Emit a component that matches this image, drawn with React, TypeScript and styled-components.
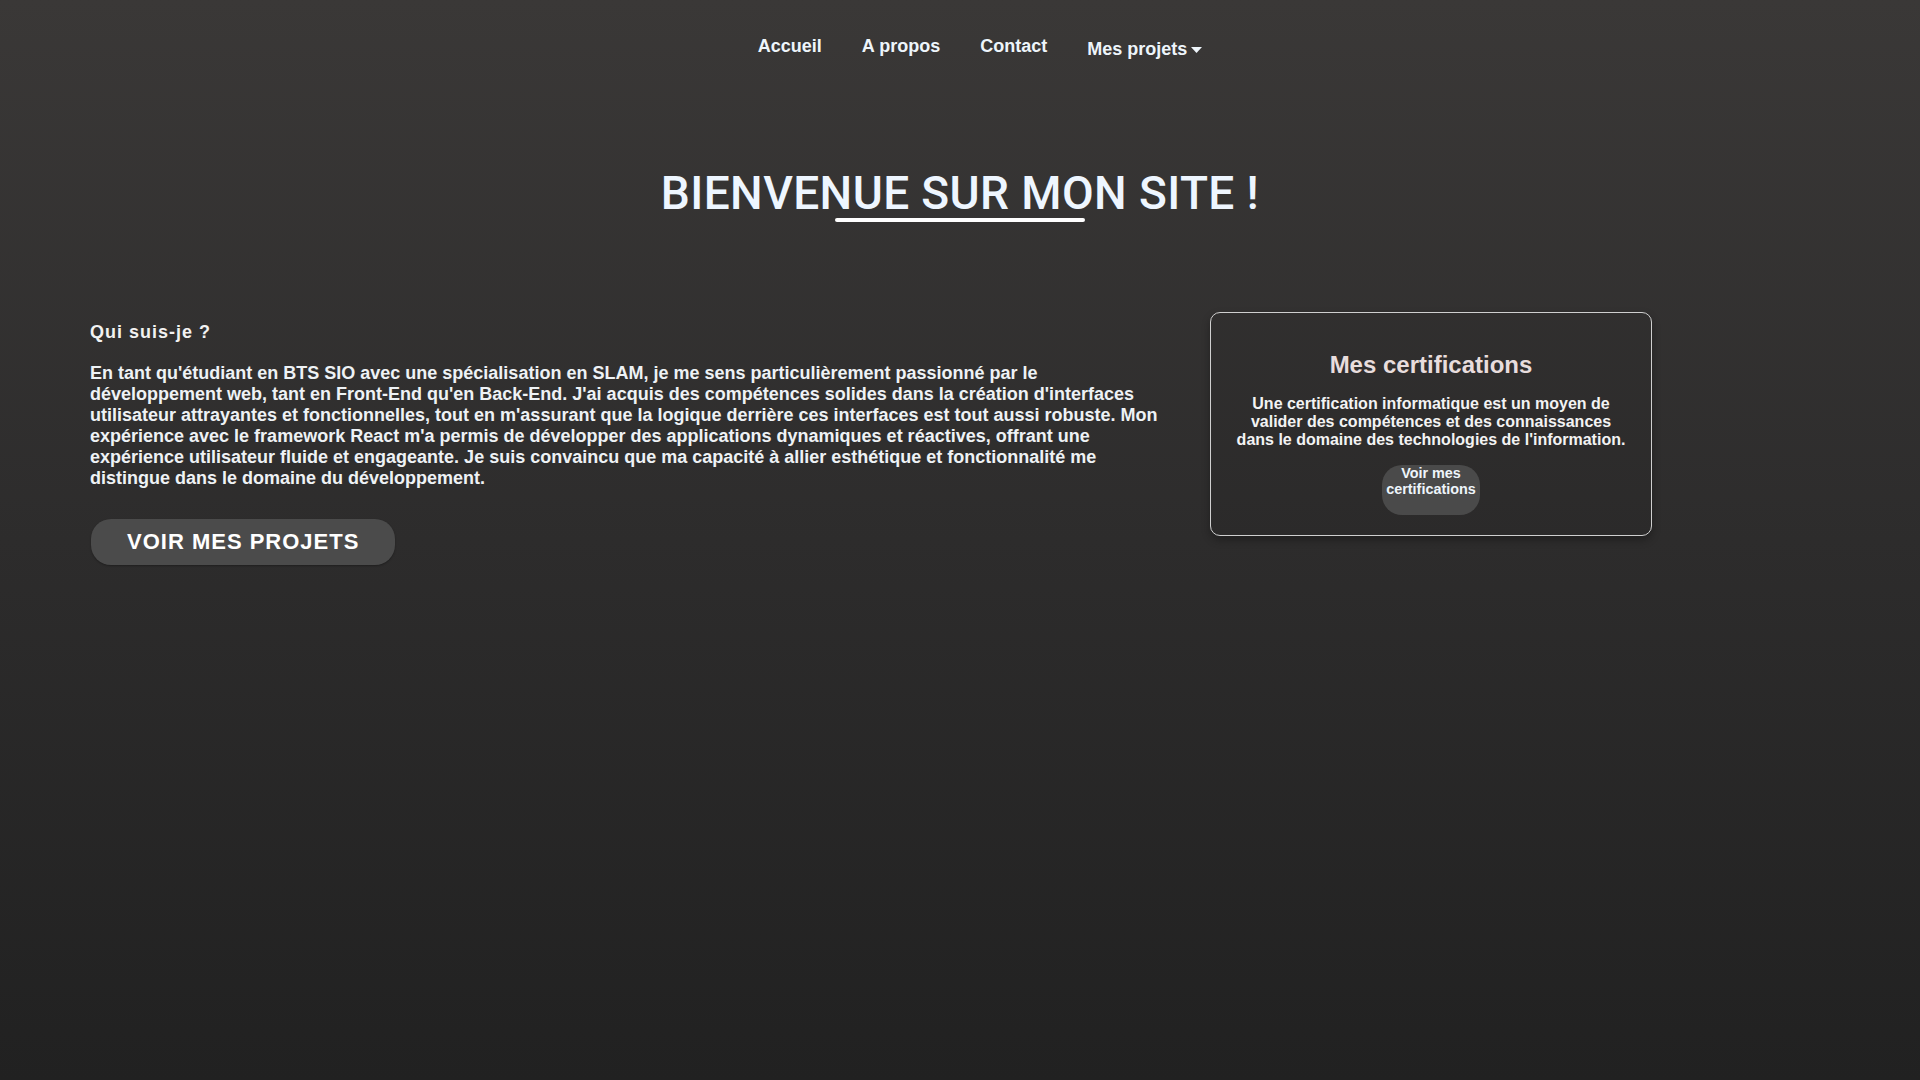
import styled, { createGlobalStyle } from 'styled-components';

const GlobalStyle = createGlobalStyle`
	html,
	body {
		margin: 0;
		padding: 0;
	}
	body {
		min-height: 100vh;
		background: linear-gradient(180deg, #3a3837 0%, #2d2c2c 50%, #212121 100%);
		font-family: 'Liberation Sans', Arial, sans-serif;
		color: #f0f0f0;
	}
`;

const navItems = ['Accueil', 'A propos', 'Contact'];

const App = () => {
	return (
		<>
			<GlobalStyle />
			<Header>
				<NavList>
					{navItems.map((item) => (
						<NavItem key={item}>
							<NavLink href="#">{item}</NavLink>
						</NavItem>
					))}
					<NavItem>
						<DropdownToggle href="#">
							Mes projets
							<svg width="11" height="6" viewBox="0 0 11 6" aria-hidden="true">
								<path d="M0 0 H11 L5.5 6 Z" fill="currentColor" />
							</svg>
						</DropdownToggle>
					</NavItem>
				</NavList>
			</Header>

			<Title>BIENVENUE SUR MON SITE !</Title>

			<Content>
				<About>
					<AboutTitle>Qui suis-je ?</AboutTitle>
					<AboutText>
						En tant qu'étudiant en BTS SIO avec une spécialisation en SLAM, je me sens particulièrement
						passionné par le développement web, tant en Front-End qu'en Back-End. J'ai acquis des
						compétences solides dans la création d'interfaces utilisateur attrayantes et fonctionnelles,
						tout en m'assurant que la logique derrière ces interfaces est tout aussi robuste. Mon
						expérience avec le framework React m'a permis de développer des applications dynamiques et
						réactives, offrant une expérience utilisateur fluide et engageante. Je suis convaincu que ma
						capacité à allier esthétique et fonctionnalité me distingue dans le domaine du développement.
					</AboutText>
					<ProjectsButton href="#">VOIR MES PROJETS</ProjectsButton>
				</About>

				<CertCard>
					<CertTitle>Mes certifications</CertTitle>
					<CertText>
						Une certification informatique est un moyen de valider des compétences et des connaissances
						dans le domaine des technologies de l'information.
					</CertText>
					<CertButton href="#">Voir mes certifications</CertButton>
				</CertCard>
			</Content>
		</>
	);
};

export default App;

const Header = styled.header`
	padding-top: 36px;
`;

const NavList = styled.ul`
	display: flex;
	justify-content: center;
	align-items: flex-start;
	gap: 40px;
	margin: 0;
	padding-left: 40px;
	list-style: none;
`;

const NavItem = styled.li`
	display: flex;
`;

const NavLink = styled.a`
	color: #eef5fb;
	font-size: 18px;
	font-weight: bold;
	text-decoration: none;
`;

const DropdownToggle = styled(NavLink)`
	display: flex;
	align-items: center;
	gap: 4px;
	margin-top: 3px;
`;

const Title = styled.h1`
	margin: 109px 0 0;
	text-align: center;
	color: #eef6ff;
	font-family: Roboto, 'Liberation Sans', sans-serif;
	font-size: 46px;
	font-weight: 500;
	letter-spacing: 0.4px;
	line-height: 49px;

	&::after {
		content: '';
		display: block;
		width: 250px;
		height: 4px;
		margin: 0 auto;
		border-radius: 2px;
		background: #ffffff;
	}
`;

const Content = styled.main`
	display: flex;
	align-items: flex-start;
	gap: 40px;
	margin-top: 90px;
	padding: 0 90px;
`;

const About = styled.section`
	flex: 0 0 1080px;
`;

const AboutTitle = styled.h3`
	margin: 10px 0 20px;
	font-size: 18px;
	font-weight: bold;
	letter-spacing: 1px;
	color: #f2f2f2;
`;

const AboutText = styled.p`
	margin: 0;
	font-size: 18px;
	font-weight: bold;
	color: #eef2f5;
`;

const ProjectsButton = styled.a`
	display: inline-block;
	margin: 30px 0 0 1px;
	padding: 10px 36px;
	border-radius: 20px;
	background: #4b4b4b;
	box-shadow: 0 1px 2px rgba(0, 0, 0, 0.3);
	color: #ffffff;
	font-size: 22px;
	font-weight: bold;
	letter-spacing: 1px;
	text-decoration: none;
`;

const CertCard = styled.aside`
	flex: 0 0 442px;
	box-sizing: border-box;
	padding: 20px;
	border: 1px solid #cfcfcf;
	border-radius: 10px;
	background: rgba(0, 0, 0, 0.04);
	box-shadow: 0 4px 8px rgba(0, 0, 0, 0.3);
	text-align: center;
`;

const CertTitle = styled.h2`
	margin: 18px 0 16px;
	font-size: 24px;
	font-weight: bold;
	color: #e8dddd;
`;

const CertText = styled.p`
	margin: 0 0 16px;
	font-size: 16px;
	font-weight: bold;
	color: #f3f3f3;
`;

const CertButton = styled.a`
	display: inline-block;
	box-sizing: border-box;
	width: 98px;
	height: 50px;
	padding: 0 4px;
	border-radius: 20px;
	background: #4a4a4a;
	color: #eef5fb;
	font-size: 14.4px;
	font-weight: bold;
	text-decoration: none;
	vertical-align: top;
`;
